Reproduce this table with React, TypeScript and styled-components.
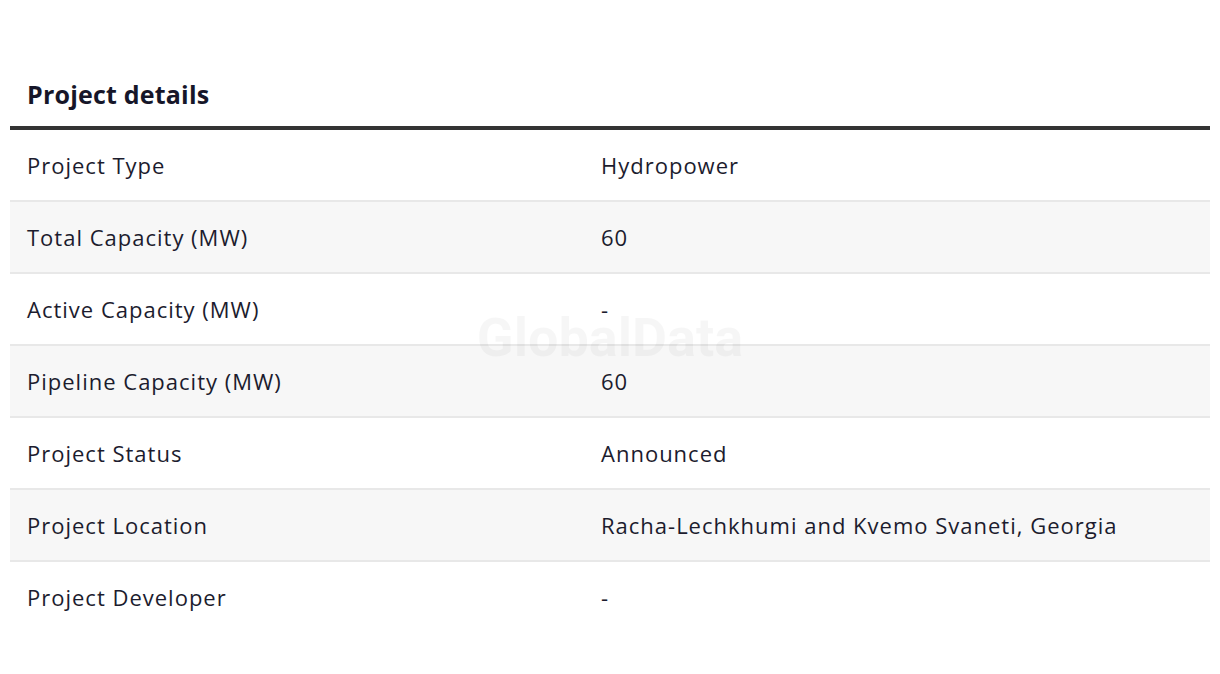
import React from "react";
import styled, { createGlobalStyle } from "styled-components";

const GlobalStyle = createGlobalStyle`
  html, body { margin: 0; padding: 0; background: #ffffff; }
  body { font-family: "Open Sans", "Liberation Sans", sans-serif; }
`;

const Page = styled.div`
  padding: 76px 10px 0 10px;
  position: relative;
`;

const Title = styled.h2`
  margin: 0;
  padding: 0 0 13px 17px;
  font-family: "Open Sans", "Liberation Sans", sans-serif;
  font-weight: 700;
  font-size: 25px;
  line-height: 37px;
  letter-spacing: 0.2px;
  color: #161629;
`;

const Table = styled.div`
  position: relative;
  border-top: 4px solid #333333;
`;

const Row = styled.div<{ $shaded: boolean; $last: boolean }>`
  display: grid;
  grid-template-columns: 574px 1fr;
  height: 70px;
  align-items: center;
  background: ${(p) => (p.$shaded ? "#f7f7f7" : "#ffffff")};
  border-bottom: 2px solid ${(p) => (p.$last ? "transparent" : "#e8e8e8")};
`;

const Cell = styled.div`
  padding-left: 17px;
  font-size: 22px;
  letter-spacing: 1px;
  color: #1c1c2e;
  font-weight: 400;
`;

const Watermark = styled.div`
  position: absolute;
  left: 0;
  right: 0;
  top: 176px;
  text-align: center;
  font-family: Roboto, "Liberation Sans", sans-serif;
  font-weight: 700;
  font-size: 54px;
  color: rgba(0, 0, 0, 0.035);
  pointer-events: none;
  user-select: none;
`;

const rows: [string, string][] = [
  ["Project Type", "Hydropower"],
  ["Total Capacity (MW)", "60"],
  ["Active Capacity (MW)", "-"],
  ["Pipeline Capacity (MW)", "60"],
  ["Project Status", "Announced"],
  ["Project Location", "Racha-Lechkhumi and Kvemo Svaneti, Georgia"],
  ["Project Developer", "-"],
];

export default function App() {
  return (
    <>
      <GlobalStyle />
      <Page>
        <Title>Project details</Title>
        <Table>
          {rows.map(([k, v], i) => (
            <Row key={k} $shaded={i % 2 === 1} $last={i === rows.length - 1}>
              <Cell>{k}</Cell>
              <Cell>{v}</Cell>
            </Row>
          ))}
          <Watermark>GlobalData</Watermark>
        </Table>
      </Page>
    </>
  );
}
